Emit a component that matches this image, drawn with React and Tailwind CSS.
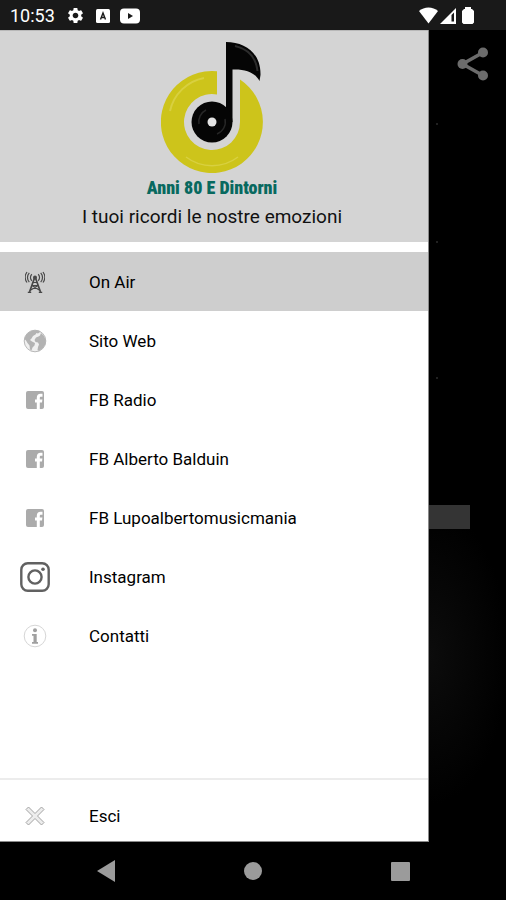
/**
 * Navigation drawer for the "Anni 80 E Dintorni" radio app.
 *
 * The drawer sits over the dark player screen, between the phone's
 * status bar and its system buttons.
 */

import { MdSettings } from 'react-icons/md';

const FacebookIcon = () => (
    <svg width="18" height="18" viewBox="0 0 18 18" aria-hidden="true">
        <rect width="18" height="18" rx="2" fill="#ababab" />
        <path d="M10.8 18v-6.600H9V8.600h1.800V6.800c0-2.500 1.400-4 3.700-4h2v2.900h-1.400c-1 0-1.300.4-1.300 1.300v1.600h2.600l-.4 2.800h-2.200V18z" fill="#fff" />
    </svg>
);

const AntennaIcon = () => (
    <svg width="20" height="22" viewBox="0 0 20 22" fill="none" stroke="#484848" strokeWidth="1.200" aria-hidden="true">
        <path d="M9.500 7 4.500 21 M10.500 7l5 14" strokeWidth="1.700" />
        <path d="M2.800 21.400h3.400 M13.800 21.400h3.400 M8 11.500h4 M7 14.500h6 M7 14.500l8 5 M13 14.500l-8 5" />
        <circle cx="10" cy="6.500" r="2" fill="#484848" stroke="none" />
        <path d="M6.800 3.300a4.500 4.500 0 0 0 0 6.400 M13.200 3.300a4.500 4.500 0 0 1 0 6.400 M4.300 1.800a7 7 0 0 0 0 9.400 M15.700 1.800a7 7 0 0 1 0 9.400 M2 1a9 9 0 0 0 0 10.500 M18 1a9 9 0 0 1 0 10.500" />
    </svg>
);

const GlobeIcon = () => (
    <svg width="24" height="24" viewBox="0 0 24 24" aria-hidden="true">
        <circle cx="12" cy="12" r="10.800" fill="#f0f0f0" stroke="#b8b8b8" />
        <path d="M1.500 10C2.500 5 7 1.300 12 1.300c2 0 4 .5 5.500 1.400L15 4.500l-1.500-.5-1 1.500-2.500 1.500-1.500 2.500L7 11l2 1.500 3 1.500-.5 2.500-2 2-1 3-1.500-1-.5-4-2-2.500L3 11.500z" fill="#b3b3b3" />
        <path d="M18 4l3 3 1.700 4-.2 4-2.500 4-4 3-1.500-1 .5-3 1-2.500-1-2-2.500-.5-1-2 1.500-2.500 2.500-1 1.500-1z" fill="#b3b3b3" />
    </svg>
);

const InstagramIcon = () => (
    <svg width="30" height="30" viewBox="0 0 30 30" fill="none" stroke="#616161" aria-hidden="true">
        <rect x="1.300" y="1.300" width="27.400" height="27.400" rx="6.500" strokeWidth="2.400" />
        <circle cx="15" cy="15" r="6.600" strokeWidth="2.400" />
        <circle cx="23" cy="7.300" r="1.800" fill="#616161" stroke="none" />
    </svg>
);

const InfoIcon = () => (
    <svg width="24" height="24" viewBox="0 0 24 24" aria-hidden="true">
        <circle cx="12" cy="12" r="10.800" fill="none" stroke="#d6d6d6" />
        <circle cx="12" cy="6.300" r="2" fill="#a0a0a0" />
        <path d="M9 10h4.700v8H15v1.800H9V18h1.500v-6.200H9z" fill="#a0a0a0" />
    </svg>
);

const CloseIcon = () => (
    <svg width="20" height="20" viewBox="0 0 20 20" aria-hidden="true">
        <path d="M3.500 1 10 7.500 16.500 1 19 3.500 12.500 10 19 16.500 16.500 19 10 12.500 3.500 19 1 16.500 7.500 10 1 3.500z" fill="#ededed" stroke="#a3a3a3" />
    </svg>
);

const Logo = () => (
    <svg width="102" height="134" viewBox="0 0 102 134" role="img" aria-label="Anni 80 E Dintorni">
        <path d="M56 31.300A51 51 0 1 0 79 39.500V82A28 28 0 1 1 56 54.500z" fill="#cdc41b" />
        <path d="M9 71A43 43 0 0 1 43 38" fill="none" stroke="#d8d040" strokeWidth="2" />
        <path d="M25 117A43 43 0 0 0 77 117" fill="none" stroke="#d8d040" strokeWidth="1.500" />
        <path d="M65 2C84 2 100 13 99.500 35L98.500 41C94 33 86 29 71.500 29.500V82H65z" fill="#050505" />
        <path d="M74 6C87 9 95 17 96.500 31" fill="none" stroke="#2c2c2c" strokeWidth="2" />
        <circle cx="51" cy="82" r="20.500" fill="#050505" />
        <path d="M38 84A13 13 0 0 1 45 70M64 79A13 13 0 0 1 56 94" fill="none" stroke="#262626" strokeWidth="1.500" />
        <circle cx="51" cy="82" r="4.500" fill="#e4e4e4" />
    </svg>
);

const items = [
    { label: 'On Air', icon: <AntennaIcon />, active: true },
    { label: 'Sito Web', icon: <GlobeIcon /> },
    { label: 'FB Radio', icon: <FacebookIcon /> },
    { label: 'FB Alberto Balduin', icon: <FacebookIcon /> },
    { label: 'FB Lupoalbertomusicmania', icon: <FacebookIcon /> },
    { label: 'Instagram', icon: <InstagramIcon /> },
    { label: 'Contatti', icon: <InfoIcon /> }
];

function DrawerItem({ label, icon, active, short }) {
    return (
        <a
            href="#"
            aria-current={active ? 'page' : undefined}
            className={`flex items-center gap-[39px] px-5 text-[17px] text-black ${short ? 'h-[50px]' : 'h-[59px]'} ${active ? 'bg-[#cecece]' : 'bg-white'}`}
        >
            <span className="flex w-[30px] shrink-0 justify-center">{icon}</span>
            <span className="pt-[2px]">{label}</span>
        </a>
    );
}

function StatusBar() {
    return (
        <header className="flex h-[30px] shrink-0 items-center justify-between bg-[#191919] pr-8 pl-[10px] text-white">
            <div className="flex items-center pt-px">
                <span className="text-[18px] leading-6">10:53</span>
                <MdSettings size={19} className="ml-[11px]" />
                <svg width="14" height="14" viewBox="0 0 14 14" className="ml-[11px]" aria-hidden="true">
                    <rect width="14" height="14" rx="1.500" fill="#fff" />
                    <path d="M4.500 10.500 7 4l2.500 6.500M5.500 8.500h3" fill="none" stroke="#191919" strokeWidth="1.400" />
                </svg>
                <svg width="20" height="16" viewBox="0 0 20 16" className="ml-[10px]" aria-hidden="true">
                    <rect y="0.500" width="20" height="15" rx="4" fill="#fff" />
                    <path d="M8 5v6l5-3z" fill="#191919" />
                </svg>
            </div>
            <div className="flex items-center gap-[2px]">
                <svg width="19" height="17" viewBox="0 0 19 17" aria-hidden="true">
                    <path d="M0 4C5-.7 14-.7 19 4L9.500 16.500z" fill="#fff" />
                </svg>
                <svg width="16" height="17" viewBox="0 0 16 17" aria-hidden="true">
                    <path d="M0 17 16 1v16z" fill="#fff" />
                    <path d="M11.500 8 14 5.500V14.500h-2.500z" fill="#191919" />
                </svg>
                <svg width="12" height="17" viewBox="0 0 12 17" className="ml-1" aria-hidden="true">
                    <path d="M3 0h6v2h1l2 2v11.500L10.500 17h-9L0 15.500V4l2-2h1z" fill="#fff" />
                </svg>
            </div>
        </header>
    );
}

export default function App() {
    return (
        <div className="flex min-h-screen flex-col bg-black font-['Roboto',sans-serif]">
            <StatusBar />

            <main className="flex flex-1">
                {/* Drawer */}
                <nav className="flex min-w-0 flex-1 flex-col border-r border-b border-[#8a8a8a] bg-white">
                    <div className="mb-[10px] flex flex-col items-center border-t border-[#b8b8b8] bg-[#d4d4d4] pt-[9px] pr-1 pb-[10px]">
                        <Logo />
                        <h1 className="font-['Roboto_Condensed','Open_Sans_Condensed','Noto_Sans_Condensed','Roboto',sans-serif] text-[18px] leading-7 font-black text-[#08695f]">
                            Anni 80 E Dintorni
                        </h1>
                        <p className="text-[19px] leading-[30px] text-[#111]">I tuoi ricordi le nostre emozioni</p>
                    </div>

                    {items.map((item) => (
                        <DrawerItem key={item.label} {...item} />
                    ))}

                    <div className="mt-auto border-t-2 border-[#ececec] pt-[11px]">
                        <DrawerItem label="Esci" icon={<CloseIcon />} short />
                    </div>
                </nav>

                {/* Visible edge of the player screen */}
                <aside className="flex w-[77px] shrink-0 flex-col bg-[radial-gradient(ellipse_80px_150px_at_0%_77%,#0c0c0c,#000)]">
                    <button type="button" aria-label="Condividi" className="mt-4 ml-7 h-9 w-8">
                        <svg width="32" height="36" viewBox="0 0 32 36" fill="#6c6c6c" aria-hidden="true">
                            <path d="M26 6.500 5.500 18 26 29.500" fill="none" stroke="#6c6c6c" strokeWidth="3.500" />
                            <circle cx="5.500" cy="18" r="5" />
                            <circle cx="26" cy="6.500" r="5" />
                            <circle cx="26" cy="29.500" r="5" />
                        </svg>
                    </button>
                    <span className="mt-[41px] ml-[7px] size-[2px] rounded-full bg-[#2c2c2c]" />
                    <span className="mt-[116px] ml-[7px] size-[2px] rounded-full bg-[#2c2c2c]" />
                    <span className="mt-[134px] ml-[7px] size-[2px] rounded-full bg-[#2c2c2c]" />
                    <div className="mt-[126px] h-6 w-[41px] bg-[#343434]" />
                </aside>
            </main>

            {/* System buttons */}
            <footer className="flex h-[58px] shrink-0 items-center justify-around px-7">
                <button type="button" aria-label="Indietro" className="flex w-9 justify-center">
                    <svg width="18" height="22" viewBox="0 0 18 22" aria-hidden="true">
                        <path d="M18 0v22L0 11z" fill="#9b9b9b" />
                    </svg>
                </button>
                <button type="button" aria-label="Home" className="size-[18px] rounded-full bg-[#9b9b9b]" />
                <button type="button" aria-label="Recenti" className="flex w-9 justify-center">
                    <span className="size-[19px] rounded-[1px] bg-[#9b9b9b]" />
                </button>
            </footer>
        </div>
    );
}
